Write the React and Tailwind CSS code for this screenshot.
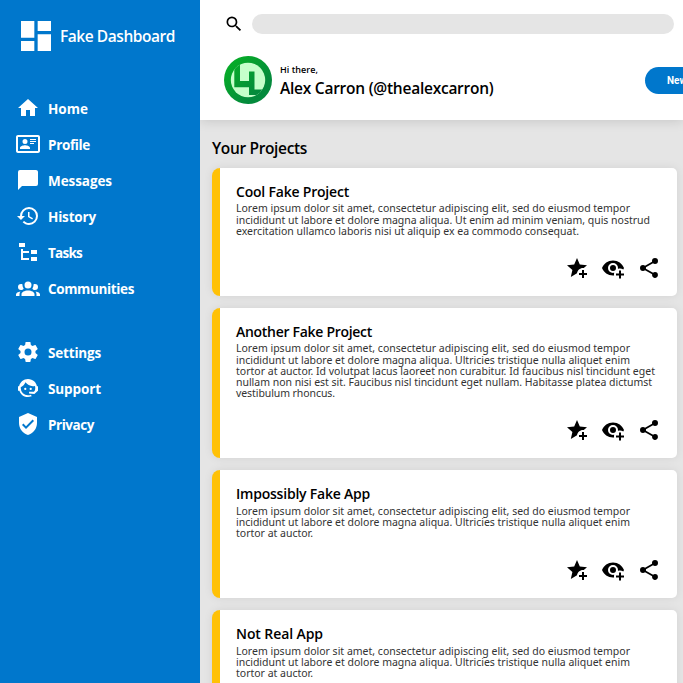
import { useEffect, useRef, useState } from 'react';

const icons = {
  dashboard: 'M13,3V9H21V3M13,21H21V11H13M3,21H11V15H3M3,13H11V3H3V13Z',
  home: 'M10,20V14H14V20H19V12H22L12,3L2,12H5V20H10Z',
  profile: 'M22,3H2C0.91,3.04 0.04,3.91 0,5V19C0.04,20.09 0.91,20.96 2,21H22C23.09,20.96 23.96,20.09 24,19V5C23.96,3.91 23.09,3.04 22,3M22,19H2V5H22V19M14,17V15.75C14,14.09 10.66,13.25 9,13.25C7.34,13.25 4,14.09 4,15.75V17H14M9,7A2.5,2.5 0 0,0 6.5,9.5A2.5,2.5 0 0,0 9,12A2.5,2.5 0 0,0 11.5,9.5A2.5,2.5 0 0,0 9,7M14,7V8H20V7H14M14,9V10H20V9H14M14,11V12H18V11H14',
  messages: 'M20,2H4A2,2 0 0,0 2,4V22L6,18H20A2,2 0 0,0 22,16V4C22,2.89 21.1,2 20,2Z',
  history: 'M13.5,8H12V13L16.28,15.54L17,14.33L13.5,12.25V8M13,3A9,9 0 0,0 4,12H1L4.96,16.03L9,12H6A7,7 0 0,1 13,5A7,7 0 0,1 20,12A7,7 0 0,1 13,19C11.07,19 9.32,18.21 8.06,16.94L6.64,18.36C8.27,20 10.5,21 13,21A9,9 0 0,0 22,12A9,9 0 0,0 13,3',
  tasks: 'M3,3H9V7H3V3M15,10H21V14H15V10M15,17H21V21H15V17M13,13H7V18H13V20H7L5,20V9H7V11H13V13Z',
  communities: 'M12,5.5A3.5,3.5 0 0,1 15.5,9A3.5,3.5 0 0,1 12,12.5A3.5,3.5 0 0,1 8.5,9A3.5,3.5 0 0,1 12,5.5M5,8C5.56,8 6.08,8.15 6.53,8.42C6.38,9.85 6.8,11.27 7.66,12.38C7.16,13.34 6.16,14 5,14A3,3 0 0,1 2,11A3,3 0 0,1 5,8M19,8A3,3 0 0,1 22,11A3,3 0 0,1 19,14C17.84,14 16.84,13.34 16.34,12.38C17.2,11.27 17.62,9.85 17.47,8.42C17.92,8.15 18.44,8 19,8M5.5,18.25C5.5,16.18 8.41,14.5 12,14.5C15.59,14.5 18.5,16.18 18.5,18.25V20H5.5V18.25M0,20V18.5C0,17.11 1.89,15.94 4.45,15.6C3.86,16.28 3.5,17.22 3.5,18.25V20H0M24,20H20.5V18.25C20.5,17.22 20.14,16.28 19.55,15.6C22.11,15.94 24,17.11 24,18.5V20Z',
  settings: 'M12,15.5A3.5,3.5 0 0,1 8.5,12A3.5,3.5 0 0,1 12,8.5A3.5,3.5 0 0,1 15.5,12A3.5,3.5 0 0,1 12,15.5M19.43,12.97C19.47,12.65 19.5,12.33 19.5,12C19.5,11.67 19.47,11.34 19.43,11L21.54,9.37C21.73,9.22 21.78,8.95 21.66,8.73L19.66,5.27C19.54,5.05 19.27,4.96 19.05,5.05L16.56,6.05C16.04,5.66 15.5,5.32 14.87,5.07L14.5,2.42C14.46,2.18 14.25,2 14,2H10C9.75,2 9.54,2.18 9.5,2.42L9.13,5.07C8.5,5.32 7.96,5.66 7.44,6.05L4.95,5.05C4.73,4.96 4.46,5.05 4.34,5.27L2.34,8.73C2.21,8.95 2.27,9.22 2.46,9.37L4.57,11C4.53,11.34 4.5,11.67 4.5,12C4.5,12.33 4.53,12.65 4.57,12.97L2.46,14.63C2.27,14.78 2.21,15.05 2.34,15.27L4.34,18.73C4.46,18.95 4.73,19.03 4.95,18.95L7.44,17.94C7.96,18.34 8.5,18.68 9.13,18.93L9.5,21.58C9.54,21.82 9.75,22 10,22H14C14.25,22 14.46,21.82 14.5,21.58L14.87,18.93C15.5,18.67 16.04,18.34 16.56,17.94L19.05,18.95C19.27,19.03 19.54,18.95 19.66,18.73L21.66,15.27C21.78,15.05 21.73,14.78 21.54,14.63L19.43,12.97Z',
  support: 'M18.72,14.76C19.07,13.91 19.26,13 19.26,12C19.26,11.28 19.15,10.59 18.96,9.95C18.31,10.1 17.63,10.18 16.92,10.18C13.86,10.18 11.15,8.67 9.5,6.34C8.61,8.5 6.91,10.26 4.77,11.22C4.73,11.47 4.73,11.74 4.73,12A7.27,7.27 0 0,0 12,19.27C13.05,19.27 14.06,19.04 14.97,18.63C15.54,19.72 15.8,20.26 15.78,20.26C14.14,20.81 12.87,21.08 12,21.08C9.58,21.08 7.27,20.13 5.57,18.42C4.53,17.38 3.76,16.11 3.33,14.73H2V10.18H3.09C3.93,6.04 7.6,2.92 12,2.92C14.4,2.92 16.71,3.87 18.42,5.58C19.69,6.84 20.54,8.45 20.89,10.18H22V14.73H21.94L18.38,18L13.08,17.4V15.73H17.91L18.72,14.76M9.27,11.77A1.13,1.13 0 1,1 9.27,14.04A1.13,1.13 0 1,1 9.27,11.77M14.72,11.77A1.13,1.13 0 1,1 14.72,14.04A1.13,1.13 0 1,1 14.72,11.77Z',
  privacy: 'M10,17L6,13L7.41,11.59L10,14.17L16.59,7.58L18,9M12,1L3,5V11C3,16.55 6.84,21.74 12,23C17.16,21.74 21,16.55 21,11V5L12,1Z',
  search: 'M9.5,3A6.5,6.5 0 0,1 16,9.5C16,11.11 15.41,12.59 14.44,13.73L14.71,14H15.5L20.5,19L19,20.5L14,15.5V14.71L13.73,14.44C12.59,15.41 11.11,16 9.5,16A6.5,6.5 0 0,1 3,9.5A6.5,6.5 0 0,1 9.5,3M9.5,5C7,5 5,7 5,9.5C5,12 7,14 9.5,14C12,14 14,12 14,9.5C14,7 12,5 9.5,5Z',
  star: 'M5.8 21L7.4 14L2 9.2L9.2 8.6L12 2L14.8 8.6L22 9.2L18.8 12H18C14.9 12 12.4 14.3 12 17.3L5.8 21M17 14V17H14V19H17V22H19V19H22V17H19V14H17Z',
  watch: 'M12,4.5C7,4.5 2.73,7.61 1,12C2.73,16.39 7,19.5 12,19.5C12.36,19.5 12.72,19.5 13.08,19.45C13.03,19.13 13,18.82 13,18.5C13,17.94 13.08,17.38 13.24,16.84C12.83,16.94 12.42,17 12,17A5,5 0 0,1 7,12A5,5 0 0,1 12,7A5,5 0 0,1 17,12C17,12.29 16.97,12.59 16.92,12.88C17.58,12.63 18.29,12.5 19,12.5C20.17,12.5 21.31,12.84 22.29,13.5C22.56,13 22.8,12.5 23,12C21.27,7.61 17,4.5 12,4.5M12,9A3,3 0 0,0 9,12A3,3 0 0,0 12,15A3,3 0 0,0 15,12A3,3 0 0,0 12,9M18,14.5V17.5H15V19.5H18V22.5H20V19.5H23V17.5H20V14.5H18Z',
  share: 'M18,16.08C17.24,16.08 16.56,16.38 16.04,16.85L8.91,12.7C8.96,12.47 9,12.24 9,12C9,11.76 8.96,11.53 8.91,11.3L15.96,7.19C16.5,7.69 17.21,8 18,8A3,3 0 0,0 21,5A3,3 0 0,0 18,2A3,3 0 0,0 15,5C15,5.24 15.04,5.47 15.09,5.7L8.04,9.81C7.5,9.31 6.79,9 6,9A3,3 0 0,0 3,12A3,3 0 0,0 6,15C6.79,15 7.5,14.69 8.04,14.19L15.16,18.34C15.11,18.55 15.08,18.77 15.08,19C15.08,20.61 16.39,21.91 18,21.91C19.61,21.91 20.92,20.61 20.92,19A2.92,2.92 0 0,0 18,16.08Z',
};

function Icon({ name, className = 'size-6' }) {
  return (
    <svg viewBox="0 0 24 24" fill="currentColor" className={`shrink-0 ${className}`}>
      <path d={icons[name]} />
    </svg>
  );
}

// One line of text whose letter spacing is adjusted so that it spans `width` pixels.
function Line({ width, children, className = '' }) {
  const ref = useRef(null);
  const [spacing, setSpacing] = useState(0);
  useEffect(() => {
    const natural = ref.current.getBoundingClientRect().width;
    setSpacing((width - natural) / children.length);
  }, [width, children]);
  return (
    <span ref={ref} className={`block w-max whitespace-nowrap ${className}`} style={{ letterSpacing: `${spacing}px` }}>
      {children}
    </span>
  );
}

const mainNav = [
  ['home', 'Home', 40],
  ['profile', 'Profile', 42],
  ['messages', 'Messages', 64],
  ['history', 'History', 48],
  ['tasks', 'Tasks', 34],
  ['communities', 'Communities', 86],
];

const secondaryNav = [
  ['settings', 'Settings', 53],
  ['support', 'Support', 53],
  ['privacy', 'Privacy', 46],
];

const projects = [
  {
    title: ['Cool Fake Project', 113],
    height: 'h-32',
    firstLine: 'pt-0.5 pb-px',
    lines: [
      ['Lorem ipsum dolor sit amet, consectetur adipiscing elit, sed do eiusmod tempor', 394],
      ['incididunt ut labore et dolore magna aliqua. Ut enim ad minim veniam, quis nostrud', 414],
      ['exercitation ullamco laboris nisi ut aliquip ex ea commodo consequat.', 343],
    ],
  },
  {
    title: ['Another Fake Project', 136],
    height: 'h-[150px]',
    firstLine: 'pt-0.5 pb-px',
    lines: [
      ['Lorem ipsum dolor sit amet, consectetur adipiscing elit, sed do eiusmod tempor', 394],
      ['incididunt ut labore et dolore magna aliqua. Ultricies tristique nulla aliquet enim', 394],
      ['tortor at auctor. Id volutpat lacus laoreet non curabitur. Id faucibus nisl tincidunt eget', 419],
      ['nullam non nisi est sit. Faucibus nisl tincidunt eget nullam. Habitasse platea dictumst', 416],
      ['vestibulum rhoncus.', 99],
    ],
  },
  {
    title: ['Impossibly Fake App', 134],
    height: 'h-32',
    firstLine: 'pt-[3px]',
    lines: [
      ['Lorem ipsum dolor sit amet, consectetur adipiscing elit, sed do eiusmod tempor', 394],
      ['incididunt ut labore et dolore magna aliqua. Ultricies tristique nulla aliquet enim', 394],
      ['tortor at auctor.', 77],
    ],
  },
  {
    title: ['Not Real App', 87],
    height: 'h-32',
    firstLine: 'pt-[3px]',
    lines: [
      ['Lorem ipsum dolor sit amet, consectetur adipiscing elit, sed do eiusmod tempor', 394],
      ['incididunt ut labore et dolore magna aliqua. Ultricies tristique nulla aliquet enim', 394],
      ['tortor at auctor.', 77],
    ],
  },
];

function NavList({ items }) {
  return (
    <ul className="flex flex-col gap-3">
      {items.map(([icon, label, width]) => (
        <li key={icon} className="flex h-6 items-center gap-2">
          <Icon name={icon} />
          <Line width={width} className="pt-0.5 text-[13.5px] leading-6 font-bold">{label}</Line>
        </li>
      ))}
    </ul>
  );
}

function Avatar() {
  return (
    <svg viewBox="0 0 48 48" className="size-12 shrink-0">
      <defs>
        <linearGradient id="ring" gradientUnits="userSpaceOnUse" x1="6" y1="6" x2="42" y2="42">
          <stop offset="0.1" stopColor="#06a929" />
          <stop offset="0.8" stopColor="#048a3c" />
        </linearGradient>
        <clipPath id="disc"><circle cx="24" cy="24" r="17.2" /></clipPath>
      </defs>
      <circle cx="24" cy="24" r="24" fill="url(#ring)" />
      <circle cx="24" cy="24" r="17.2" fill="#c5ffca" />
      <path clipPath="url(#disc)" d="M10.3,6H16V25H25V15.5H30.5V33.5H42V39H25V31.2H10.3Z" fill="url(#ring)" />
    </svg>
  );
}

function ProjectCard({ project }) {
  return (
    <article className={`flex shrink-0 flex-col justify-between rounded-l-lg rounded-r-[5px] border-l-8 border-[#ffc107] bg-white px-4 pt-[15px] pb-4 shadow-[0_0_10px_rgba(0,0,0,0.08)] ${project.height}`}>
      <div>
        <h3><Line width={project.title[1]} className="text-sm leading-[18px] font-semibold text-black">{project.title[0]}</Line></h3>
        <p className="font-['Noto_Sans','Open_Sans',sans-serif] text-[10.5px] leading-[11px] text-[#333]">
          {project.lines.map(([text, width], i) => (
            <Line key={text} width={width} className={i === 0 ? project.firstLine : ''}>{text}</Line>
          ))}
        </p>
      </div>
      <div className="flex justify-end gap-3 text-black">
        <Icon name="star" />
        <Icon name="watch" />
        <Icon name="share" />
      </div>
    </article>
  );
}

export default function App() {
  return (
    <div className="flex h-[683px] w-[683px] overflow-hidden bg-[#e5e5e5] font-['Open_Sans','Noto_Sans',sans-serif] text-black">
      <aside className="z-10 flex w-[200px] shrink-0 flex-col bg-[#0077cc] p-4 text-white">
        <div className="mb-10 flex h-10 items-center gap-1">
          <Icon name="dashboard" className="size-10" />
          <Line width={115} className="text-[15.5px] leading-6 font-semibold">Fake Dashboard</Line>
        </div>
        <nav className="flex flex-col gap-10">
          <NavList items={mainNav} />
          <NavList items={secondaryNav} />
        </nav>
      </aside>
      <div className="flex w-[483px] flex-col">
        <header className="h-[120px] shrink-0 bg-white px-6 pt-3.5 shadow-[0_0_12px_rgba(0,0,0,0.16)]">
          <div className="flex w-[450px] items-center gap-2">
            <Icon name="search" className="size-5" />
            <div className="h-5 flex-1 rounded-full bg-[#e5e5e5]" />
          </div>
          <div className="mt-[22px] flex items-center">
            <Avatar />
            <div className="ml-2 w-[365px] shrink-0 pt-0.5">
              <Line width={38} className="pt-px text-[9px] leading-3 font-semibold">Hi there,</Line>
              <Line width={213.5} className="text-[15.5px] leading-6 font-semibold">Alex Carron (@thealexcarron)</Line>
            </div>
            <button className="h-[27px] w-24 shrink-0 rounded-full bg-[#0077cc] pl-[22px] text-left font-['Roboto',sans-serif] text-[10px] font-bold text-white">New</button>
          </div>
        </header>
        <main className="flex flex-1 flex-col gap-3 pt-[18px] pr-1.5 pl-3">
          <h2 className="-mb-0.5 h-5"><Line width={95} className="text-[15.5px] leading-5 font-semibold">Your Projects</Line></h2>
          {projects.map((project) => <ProjectCard key={project.title[0]} project={project} />)}
        </main>
      </div>
    </div>
  );
}
